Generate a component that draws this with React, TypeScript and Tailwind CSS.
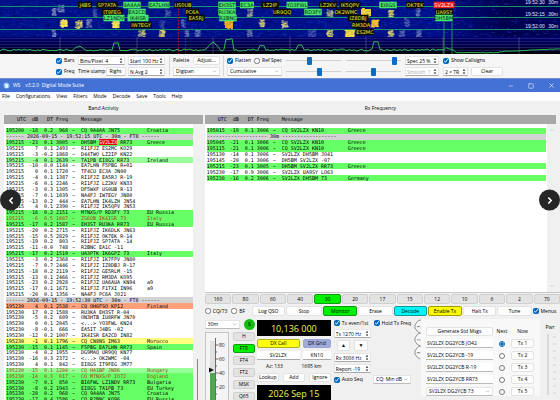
import React from "react";
import { ChevronDown, ChevronLeft, ChevronRight, ChevronUp, Minus, Square, X } from "lucide-react";
import { clsx } from "clsx";

type Tone = "none" | "green" | "pale" | "orange" | "yellow" | "sep";

interface Decode {
  utc: string;
  db: string;
  dt: string;
  freq: string;
  msg: string;
  place?: string;
  tone: Tone;
  red?: boolean;
}

const toneClass: Record<Tone, string> = {
  none: "",
  green: "bg-[#66ff66]",
  pale: "bg-[#99ff99]",
  orange: "bg-[#ffa07a]",
  yellow: "bg-[#ffff80]",
  sep: "bg-[#d3d3d3]",
};

const d = (line: string, place = "", tone: Tone = "none", red = false): Decode => {
  const [utc, db, dt, freq, ...rest] = line.split(" ");
  return { utc, db, dt, freq, msg: rest.join(" "), place, tone, red };
};

const sep = (msg: string): Decode => ({ utc: "", db: "", dt: "", freq: "", msg, tone: "sep" });

const bandRows: Decode[] = [
  d("195200 -18 0.2 968 CQ 9A4AA JN75", "Croatia", "green"),
  sep("------ 2026-09-15 - 19:52:15 UTC - 30m - FT8 ------"),
  d("195215 -23 0.1 3005 DH5BM SV2LZX RR73", "Greece", "green"),
  d("195215 7 0.1 2493 RI1FJZ ES2MC KO29"),
  d("195215 -3 -0.2 1868 D44TWO LZ2IP KN22"),
  d("195215 -4 0.1 2639 TA1PB EI8GS RR73", "Ireland", "pale"),
  d("195215 -10 0.0 1144 EA7LHN F5PBG R+01"),
  d("195215 0 0.1 1720 TF4CU EC3A JN00"),
  d("195215 -4 0.1 1387 RI1FJZ EA5RJ R-19"),
  d("195215 -6 0.1 2246 RI1FJZ LZ2KV KN33"),
  d("195215 -3 0.3 1305 DF5WXF US0UB R-13"),
  d("195215 -7 0.1 1039 NA4FJ IW7EGY JN80"),
  d("195215 -13 0.2 444 EA7LHN IK4LZH JN54"),
  d("195215 4 0.1 2390 RI1FJZ IK5QPV JN53"),
  d("195215 -16 0.2 2151 M7NXS/P RD3FY 73", "EU Russia", "green"),
  d("195215 -6 0.5 1007 ZS6OB IK4ISR 73", "Italy", "green", true),
  d("195215 -17 0.2 1587 EH3ST RU3KA RR73", "EU Russia", "green"),
  d("195215 -20 0.2 2715 RI1FJZ IK6DLK JN63"),
  d("195215 -15 0.5 2829 RI1FJZ OK7EK R-14"),
  d("195215 -19 0.2 803 RI1FJZ SP7ATA -14"),
  d("195215 -11 -0.0 748 R2BNC EA1C -11"),
  d("195215 -17 0.2 1519 UA3PTK IK6GPZ 73", "Italy", "green"),
  d("195215 -3 0.2 2368 RI1FJZ IK7FPV JN80"),
  d("195215 -7 0.7 2446 RI1FJZ IZ8DBJ R-17"),
  d("195215 -18 0.2 2119 RI1FJZ GE5RLM -15"),
  d("195215 -13 0.1 2466 RI1FJZ RM3DA KO95"),
  d("195215 -23 0.2 2928 RI1FJZ UA6AUA KN94", "a9"),
  d("195215 -17 0.1 1671 RI1FJZ F1TXI IN96", "a9"),
  d("195215 -20 0.1 1356 NA4FJ PC6A JO21"),
  sep("------ 2026-09-15 - 19:52:30 UTC - 30m - FT8 ------"),
  d("195230 4 0.1 2538 CQ OH6FSO KP12", "Finland", "orange"),
  d("195230 17 0.2 1588 RU3KA EH3ST R-04"),
  d("195230 -5 0.2 609 ON3HTB IU8RFW JN70"),
  d("195230 0 0.1 2045 <...> YO3FWL KN24"),
  d("195230 -8 -0.1 666 EA5IT J4BS -02"),
  d("195230 -12 0.2 1007 IK4ISR EA2CD IN82"),
  d("195230 -1 0.1 1796 CQ CN8NS IM63", "Morocco", "yellow"),
  d("195230 -15 0.1 1145 F5PBG EA7LHN RR73", "Spain", "green"),
  d("195230 -4 0.2 1955 DG9MAQ UR9QQ KN77"),
  d("195230 -16 0.3 2372 <...> OK2WMC -04"),
  d("195230 4 0.1 842 EI8GS IT9FEG JM77"),
  d("195230 -15 0.1 1284 CQ HA1BF JN86", "Hungary", "pale", true),
  d("195230 -14 0.3 917 CQ M7NXS/P IO72", "England", "green", true),
  d("195230 -7 0.1 850 BI6FWL LZ1NDV RR73", "Bulgaria", "green"),
  d("195230 -8 0.2 1943 EI8GS TA1PB 73", "EU Turkey", "green"),
  d("195230 -20 0.2 968 CQ 9A4AA JN75", "Croatia", "green"),
];

const rxRows: Decode[] = [
  d("195015 -19 0.1 3006 CQ SV2LZX KN10", "Greece", "green"),
  sep("-------------------- 30m ------------------"),
  d("195045 -21 0.1 3006 CQ SV2LZX KN10", "Greece", "green"),
  d("195115 -21 0.1 3006 CQ SV2LZX KN10", "Greece", "green"),
  d("195130 -14 0.1 3006 SV2LZX DH5BM JO41"),
  d("195145 -20 0.1 3006 DH5BM SV2LZX -07"),
  d("195215 -23 0.1 3005 DH5BM SV2LZX RR73", "Greece", "green"),
  d("195230 -17 0.9 3006 SV2LZX UA9SY LO63"),
  d("195230 -16 0.2 3006 SV2LZX DH5BM 73", "Germany", "green"),
];

const mono = "font-['DejaVu_Sans_Mono',monospace] text-[5px]";
const rowCols = "grid grid-cols-[20px_12px_15px_15px_13px_66px_1fr] items-center whitespace-nowrap";

function DecodeRow({ row, mark = false }: { row: Decode; mark?: boolean }) {
  if (row.tone === "sep") {
    return (
      <li className={clsx("flex min-h-0 flex-1 items-center whitespace-pre leading-none text-black", toneClass.sep)}>{row.msg}</li>
    );
  }
  const words = row.msg.split(" ");
  return (
    <li className={clsx("min-h-0 flex-1 leading-none", rowCols, toneClass[row.tone], row.red ? "text-[#a33a1c]" : "text-black")}>
      <span>{row.utc}</span>
      <span className="text-right">{row.db}</span>
      <span className="text-right">{row.dt}</span>
      <span className="text-right">{row.freq}</span>
      <span className="pl-1">~</span>
      <span>
        {mark ? (
          <>
            {words[0]} <mark className="bg-red-600 text-white">{words[1]}</mark> {words[2]}
          </>
        ) : (
          row.msg
        )}
      </span>
      <span>{row.place}</span>
    </li>
  );
}

function ListHeader() {
  return (
    <div className={clsx("h-[9px] shrink-0 bg-[#a8a8a8] pl-[2px] leading-none text-black", mono, rowCols)}>
      <span className="text-right">UTC</span>
      <span className="text-right">dB</span>
      <span className="text-right">DT</span>
      <span className="text-right">Freq</span>
      <span />
      <span>Message</span>
    </div>
  );
}

/* ---------- small form parts ---------- */

function Check({ label, on = false }: { label: string; on?: boolean }) {
  return (
    <label className="flex items-center gap-[2px] whitespace-nowrap">
      <input type="checkbox" defaultChecked={on} className="size-[6px] accent-[#0067c0]" />
      {label}
    </label>
  );
}

function Btn({ children, className }: { children: React.ReactNode; className?: string }) {
  return (
    <button
      type="button"
      className={clsx("flex h-[9px] items-center justify-center whitespace-nowrap rounded-[2px] border leading-none", className ?? "border-[#e2e2e2] bg-[#fdfdfd]")}
    >
      {children}
    </button>
  );
}

function Spin({ value, label, className }: { value: string; label: string; className?: string }) {
  return (
    <span className={clsx("flex h-[9px] items-center rounded-[1px] border border-[#e4e4e4] border-b-[#aaa] bg-white px-[1px]", className)}>
      <input aria-label={label} defaultValue={value} className="w-0 min-w-0 flex-1 bg-transparent leading-none" />
      <svg viewBox="0 0 4 8" className="h-[7px] w-[4px] shrink-0" aria-hidden="true">
        <path d="M0.5 3L2 1L3.5 3ZM0.5 5L2 7L3.5 5Z" fill="#222" />
      </svg>
    </span>
  );
}

function Drop({ value, label, className }: { value: string; label: string; className?: string }) {
  return (
    <span className={clsx("relative flex h-[9px] items-center rounded-[1px] border border-[#e4e4e4] border-b-[#bbb] bg-white", className)}>
      <select aria-label={label} className="w-full appearance-none bg-transparent pl-[2px] leading-none">
        <option>{value}</option>
      </select>
      <ChevronDown className="pointer-events-none absolute right-[2px] size-[5px] text-[#666]" />
    </span>
  );
}

/* ---------- waterfall ---------- */

type Tag = [string, number, number, "g" | "y" | "r"];

const tags: Tag[] = [
  ["J4BS", 85, 5, "y"], ["SP7ATA", 107, 5, "y"], ["9A4AA", 132, 5, "g"], ["EA7LHN", 159, 5, "g"],
  ["US0UB", 183, 5, "y"], ["EH3ST", 227, 5, "g"], ["EC3A", 247, 5, "g"], ["LZ2IP", 270, 5, "y"],
  ["YO3FWL", 297, 5, "g"], ["LZ2KV", 328, 5, "y"], ["IK5QPV", 350, 5, "y"], ["EI8GS", 388, 5, "g"],
  ["OK7EK", 415, 5, "y"], ["SV2LZX", 444, 5, "r"],
  ["IT9FEG", 112, 12, "y"], ["EA2CD", 137, 12, "g"], ["PC6A", 192, 12, "y"], ["RU3KA", 227, 12, "g"],
  ["UR9QQ", 282, 12, "y"], ["RD3FY", 313, 12, "g"], ["OK2WMC", 346, 12, "y"], ["UA9SY", 444, 12, "y"],
  ["LZ1NDV", 114, 18, "g"], ["IK4ISR", 138, 18, "g"], ["EA5RJ", 196, 18, "y"], ["R2BNC", 228, 18, "g"],
  ["IZ8DBJ", 358, 18, "y"], ["DH5BM", 444, 18, "g"],
  ["IW7EGY", 141, 25, "y"], ["RM3DA", 361, 25, "y"], ["ES2MC", 365, 32, "y"],
];

// x, y, width, colour, strength
const blobs: [number, number, number, string, number][] = [
  [64, 23, 9, "#ffe955", 0.95], [79, 24, 9, "#ddd36a", 0.9], [89, 23, 7, "#8f9ac0", 0.6], [116, 24, 9, "#ffe94d", 0.95],
  [142, 33, 9, "#c9c277", 0.8], [162, 33, 8, "#e8dc66", 0.85], [229, 24, 10, "#ffb31f", 1], [262, 23, 7, "#d9cf72", 0.8],
  [54, 12, 6, "#8c96c0", 0.6], [61, 8, 8, "#8c96c0", 0.6], [54, 33, 6, "#8c96c0", 0.6], [250, 13, 7, "#a9ab93", 0.7],
  [187, 33, 6, "#7480bd", 0.6], [198, 33, 8, "#7f8bc0", 0.6], [250, 33, 7, "#8f98ba", 0.5], [285, 24, 8, "#d4cc83", 0.8],
  [330, 13, 8, "#b9b985", 0.8], [330, 33, 8, "#dbd26c", 0.8], [350, 33, 11, "#ffe63c", 0.95], [366, 12, 12, "#ffdf3a", 1],
  [375, 23, 9, "#ffc629", 1], [391, 13, 7, "#ddd465", 0.85], [391, 33, 7, "#d5cd70", 0.8], [402, 34, 7, "#6b78bd", 0.6],
  [419, 33, 7, "#7480bd", 0.6], [407, 22, 7, "#6b78bd", 0.5], [162, 24, 7, "#4a57a8", 0.5], [183, 23, 5, "#6572b8", 0.6],
  [312, 33, 10, "#5663b4", 0.6], [418, 12, 6, "#7884bf", 0.6], [168, 13, 7, "#5c69b0", 0.5], [95, 13, 6, "#5c69b0", 0.5],
];

const rand = (n: number) => {
  const s = Math.sin(n * 127.1) * 43758.5453;
  return s - Math.floor(s);
};

const tagFill = { g: "#4be36f", y: "#0b0b00", r: "#f01818" };
const tagText = { g: "#002c08", y: "#f5f03c", r: "#ffffff" };

function peak(x: number) {
  const bump = (c: number, w: number, h: number) => (Math.abs(x - c) < w ? h : 0);
  return bump(79, 4, 3) + bump(116, 4, 7) + bump(229, 5, 11) + bump(262, 3, 4) + bump(300, 4, 5) + bump(376, 4, 8) + Math.max(0, 8 - Math.abs(x - 213)) + bump(447, 3, 2);
}

function Waterfall() {
  let trace = "M0 51";
  for (let x = 2; x <= 560; x += 2) {
    const base = x > 455 ? 52 - Math.max(0, (x - 500) / 20) + (x < 500 ? 1 : 0) : 51;
    trace += `L${x} ${(base - peak(x) - rand(x) * (x > 455 ? 0.6 : 2)).toFixed(1)}`;
  }
  return (
    <svg viewBox="0 0 560 54" preserveAspectRatio="xMidYMid slice" className="block h-[54px] w-full shrink-0" role="img" aria-label="Waterfall">
      <defs>
        <linearGradient id="sea">
          <stop offset="0" stopColor="#001088" />
          <stop offset="0.78" stopColor="#00108c" />
          <stop offset="0.9" stopColor="#00004e" />
          <stop offset="1" stopColor="#000058" />
        </linearGradient>
        <linearGradient id="floor" x2="0" y2="1">
          <stop offset="0" stopColor="#000070" />
          <stop offset="0.6" stopColor="#00003a" />
          <stop offset="1" stopColor="#000000" />
        </linearGradient>
      </defs>
      <rect width="560" height="54" fill="url(#sea)" />
      {Array.from({ length: 1500 }, (_, i) => (
        <rect key={i} x={rand(i + 1) * 560} y={rand(i + 5000) * 37} width={1 + rand(i + 9) * 3} height="1" fill={i % 3 ? "#1833b4" : "#000058"} opacity={0.5} />
      ))}
      {blobs.map(([x, y, w, c, o], b) => (
        <g key={b} fill={c}>
          <rect x={x - w / 2 + 1} y={y - 3} width={w - 2} height="7" opacity={o > 0.9 ? 0.85 : o * 0.5} />
          {Array.from({ length: 22 }, (_, i) => (
            <rect key={i} x={x - w / 2 + rand(b * 40 + i) * (w - 2)} y={y - 4 + rand(b * 71 + i + 3) * 8} width="2" height="1" opacity={o} />
          ))}
        </g>
      ))}
      <rect y="37" width="560" height="17" fill="url(#floor)" />
      {[38, 41, 44, 47, 50].map((y) => (
        <path key={y} d={`M0 ${y}.5H560`} stroke="#3a3a98" strokeWidth="0.6" opacity="0.8" />
      ))}
      {[60, 137, 213, 290, 366, 443, 519].map((x) => (
        <path key={x} d={`M${x} 37V54`} stroke="#8a8ab5" strokeWidth="0.6" opacity="0.7" />
      ))}
      {[6, 17, 29].map((y) => (
        <path key={y} d={`M0 ${y}.5H560`} stroke="#18a068" strokeWidth="0.9" />
      ))}
      <path d="M178.5 8V54M185.5 8V54" stroke="#c01038" strokeDasharray="2 1" strokeWidth="0.8" />
      <path d="M444 22V54M452 22V54" stroke="#30c060" strokeWidth="0.7" />
      <path d={trace} fill="none" stroke="#38c860" strokeWidth="0.9" />
      <g fontFamily="'DejaVu Sans', sans-serif" fontSize="5" textAnchor="middle">
        {tags.map(([name, x, y, k]) => (
          <g key={name}>
            <rect x={x - name.length * 1.75} y={y - 3.3} width={name.length * 3.5} height="6.6" fill={tagFill[k]} />
            <text x={x} y={y + 2} fill={tagText[k]}>
              {name}
            </text>
          </g>
        ))}
      </g>
      <g fontFamily="'Liberation Sans', sans-serif" fontSize="5" textAnchor="middle" fill="#e6e6f5">
        {["19:52:30", "19:52:15", "19:52:00"].map((t, i) => (
          <g key={t}>
            <text x="535" y={4 + i * 12}>{t}</text>
            <text x="553" y={4 + i * 12}>30m</text>
          </g>
        ))}
      </g>
    </svg>
  );
}

function Slider({ label, value, className }: { label: string; value: number; className: string }) {
  return (
    <input
      type="range"
      aria-label={label}
      defaultValue={value}
      className={clsx(
        "h-[9px] min-w-0 appearance-none bg-[linear-gradient(#d0d0d0,#d0d0d0)] bg-[length:100%_1px] bg-center bg-no-repeat [&::-webkit-slider-thumb]:h-[8px] [&::-webkit-slider-thumb]:w-[5px] [&::-webkit-slider-thumb]:appearance-none [&::-webkit-slider-thumb]:rounded-[1px] [&::-webkit-slider-thumb]:bg-[#0a6cc4]",
        className,
      )}
    />
  );
}

function WaterfallControls() {
  return (
    <div className="flex h-[25px] shrink-0 items-center border-b border-[#6f8fd0] bg-[#f5f5f5] pl-[56px]">
      <div className="grid grid-cols-[22px_48px_39px] gap-y-[2px] border-r border-[#d5d5d5] pr-1">
        <Check label="Bars" on />
        <Spin label="Bins per pixel" value="Bins/Pixel  4" className="mr-[1px]" />
        <Spin label="Start" value="Start 100 Hz" className="ml-[2px]" />
        <Check label="Freq" on />
        <span className="flex items-center whitespace-nowrap">
          Time stamp
          <Drop label="Time stamp" value="Right" className="ml-[1px] min-w-0 flex-1" />
        </span>
        <Spin label="Averages" value="N Avg 2" className="ml-[2px]" />
      </div>
      <div className="grid w-[54px] gap-y-[2px] border-r border-[#d5d5d5] px-[3px]">
        <span className="flex items-center justify-between">
          Palette
          <Btn className="w-[27px] border-[#e2e2e2] bg-[#fdfdfd]">Adjust...</Btn>
        </span>
        <Drop label="Palette" value="Digipan" />
      </div>
      <div className="grid w-[58px] gap-y-[2px] pl-[3px]">
        <span className="flex h-[9px] items-center gap-[3px]">
          <Check label="Flatten" on />
          <Check label="Ref Spec" />
        </span>
        <Drop label="Spectrum" value="Cumulative" />
      </div>
      <div className="grid w-[119px] grid-cols-2 gap-x-1 gap-y-[2px] pl-1">
        <Slider label="Waterfall gain" value={42} className="w-full" />
        <Slider label="Waterfall zero" value={92} className="w-full" />
        <Slider label="Spectrum gain" value={62} className="w-full" />
        <Slider label="Spectrum zero" value={50} className="w-full" />
      </div>
      <div className="ml-1 grid w-[34px] gap-y-[2px]">
        <Spin label="Spectrum share" value="Spec 25 %" />
        <Spin label="Smooth" value="Smooth  1" className="text-[#aaa]" />
      </div>
      <div className="ml-1 grid gap-y-[2px]">
        <span className="flex h-[9px] items-center"><Check label="Show Callsigns" on /></span>
        <span className="flex gap-[3px]">
          <Spin label="Slots" value="2 × TR" className="w-[25px]" />
          <Btn className="w-[32px] border-[#e2e2e2] bg-[#fdfdfd]">Clear</Btn>
        </span>
      </div>
    </div>
  );
}

/* ---------- transmit controls ---------- */

const bands = ["160", "80", "60", "40", "30", "20", "17", "15", "12", "10", "6", "2", "70"];
const modes = ["H", "FT8", "FT4", "FT2", "MSK", "Q65"];
const messages = ["SV2LZX DG2YCB JO42", "SV2LZX DG2YCB -19", "SV2LZX DG2YCB R-19", "SV2LZX DG2YCB RR73", "SV2LZX DG2YCB 73"];

const greyBtn = "border-[#cfcfcf] bg-[#e3e3e3]";
const litBtn = "border-[#109a10] bg-[#00f000]";

function Meter() {
  return (
    <svg viewBox="0 0 24 68" className="h-[68px] w-[24px]" role="img" aria-label="Input level">
      <rect x="0.5" y="0.5" width="23" height="72" fill="#f4f4f4" stroke="#c4c4c4" />
      <rect x="5" y="9" width="5" height="59" fill="#e0e0e0" />
      <rect x="5" y="41" width="5" height="27" fill="#4fa84f" />
      <path d="M4 35.5L9 38L4 40.5Z" fill="#111" />
      <path d="M10.5 6V68" stroke="#333" strokeWidth="0.7" />
      {Array.from({ length: 9 }, (_, i) => (
        <path key={i} d={`M10.5 ${13 + i * 7}H${i % 2 ? 12 : 13.5}`} stroke="#333" strokeWidth="0.7" />
      ))}
      <g fontSize="5" fontFamily="'Open Sans', sans-serif" fill="#222">
        {[80, 60, 40, 20].map((n, i) => (
          <text key={n} x="14" y={15 + i * 14}>{n}</text>
        ))}
      </g>
    </svg>
  );
}

function Controls() {
  return (
    <div className="bg-[#f0f0f0]">
      <div className="grid grid-cols-13 gap-[1px] border-t border-[#c8c8c8] pt-[1px]">
        {bands.map((b) => (
          <Btn key={b} className={clsx("h-[10px]!", b === "30" ? litBtn : greyBtn)}>{b}</Btn>
        ))}
      </div>
      <div className="grid grid-cols-[26fr_20fr_34fr_37fr_35fr_35fr_34fr_35fr_34fr_35fr_28fr] items-center gap-[1px] py-[2px] *:h-[10px]">
        <Check label="CQ/73" />
        <Check label="BF" />
        <Btn>Log QSO</Btn>
        <Btn>Stop</Btn>
        <Btn className={litBtn}>Monitor</Btn>
        <Btn>Erase</Btn>
        <Btn className="border-[#159a9a] bg-[#00f5f5]">Decode</Btn>
        <Btn className="border-[#a0a000] bg-[#fafa00]">Enable Tx</Btn>
        <Btn>Halt Tx</Btn>
        <Btn>Tune</Btn>
        <Check label="Menus" on />
      </div>
      <div className="flex items-start pt-[1px]">
        <div className="w-[50px] shrink-0">
          <div className="flex items-center justify-between">
            <Drop label="Band" value="30m" className="w-[35px]" />
            <span className="flex size-[11px] items-center justify-center rounded-full bg-[#12c012] text-[6px]">S</span>
          </div>
          <div className="mt-[2px] flex justify-between">
            <Meter />
            <div className="flex w-[22px] flex-col gap-[3px]">
              {modes.map((m) => (
                <Btn key={m} className={m === "FT8" ? litBtn : greyBtn}>{m}</Btn>
              ))}
            </div>
          </div>
        </div>
        <div className="ml-[2px] mt-[1px] flex w-[74px] shrink-0 flex-col gap-[3px]">
          <output className="flex h-[16px] items-center justify-center bg-black text-[9px] leading-none text-[#f5f550]">10,136 000</output>
          <div className="grid grid-cols-[43px_1fr] gap-x-[3px] gap-y-[3px]">
            <Btn className="border-[#b0b020] bg-[#ffff10]">DX Call</Btn>
            <Btn className="border-[#9aa5d6] bg-[#9fa9da]">DX Grid</Btn>
            <input aria-label="DX call" defaultValue="SV2LZX" className="h-[9px] min-w-0 border-b border-[#aaa] bg-white text-center leading-none" />
            <input aria-label="DX grid" defaultValue="KN10" className="h-[9px] min-w-0 border-b border-[#aaa] bg-white text-center leading-none" />
          </div>
          <div className="flex h-[7px] items-center justify-around leading-none">
            <span>Az: 133</span>
            <span>1695 km</span>
          </div>
          <div className="grid grid-cols-3 gap-1">
            <Btn>Lookup</Btn>
            <Btn>Add</Btn>
            <Btn>Ignore</Btn>
          </div>
          <output className="flex h-[16px] items-center justify-center whitespace-nowrap bg-black text-[9px] leading-none text-[#f5f550]">2026 Sep 15</output>
        </div>
        <div className="ml-[3px] min-w-0 flex-1">
          <div className="flex h-[8px] items-center gap-[5px]">
            <Check label="Tx even/1st" on />
            <Check label="Hold Tx Freq" on />
          </div>
          <div className="mt-[2px] flex w-[37px] flex-col gap-[2px]">
            <Spin label="Transmit frequency" value="Tx 1270 Hz" />
            <div className="grid grid-cols-2 gap-1 px-[3px]">
              <Btn className="h-[11px]! border-[#e2e2e2] bg-[#fdfdfd]">▲</Btn>
              <Btn className="h-[11px]! border-[#e2e2e2] bg-[#fdfdfd]">▼</Btn>
            </div>
            <Spin label="Receive frequency" value="Rx 3006 Hz" />
            <Spin label="Report" value="Report -19" />
          </div>
          <div className="mt-[2px] flex items-center justify-between">
            <Check label="Auto Seq" on />
            <Drop label="CQ strategy" value="CQ: Min dB" className="w-[38px]" />
          </div>
        </div>
        <svg viewBox="0 0 8 42" className="ml-[2px] h-[42px] w-[8px] shrink-0" aria-hidden="true">
          {[0, 13, 26].map((y, i) => (
            <g key={y}>
              <path d={`M8 ${y + 1}Q5 ${y + 1} 4 ${y + 3}L2 ${y + 6}V${y + 9}L4 ${y + 12}L7 ${y + 14}`} fill="#f8f8f8" stroke="#777" strokeWidth="0.8" />
              <text x={-y - 9} y="7" transform="rotate(-90)" fontSize="4" fill="#222">{i + 1}</text>
            </g>
          ))}
        </svg>
        <div className="grid w-[119px] shrink-0 grid-cols-[67px_16px_23px] items-center justify-items-stretch gap-x-[1px] gap-y-[3px] bg-[#f8f8f8] px-[5px] pt-[8px]">
          <Btn>Generate Std Msgs</Btn>
          <span className="text-center">Next</span>
          <span className="text-center">Now</span>
          {messages.map((m, i) => (
            <React.Fragment key={m}>
              {i === 4 ? (
                <Drop label="Message 5" value={m} />
              ) : (
                <input aria-label={`Message ${i + 1}`} defaultValue={m} className="h-[9px] min-w-0 border-b border-[#bbb] bg-white pl-[1px] leading-none" />
              )}
              <input type="radio" name="next" aria-label={`Next is Tx ${i + 1}`} defaultChecked={i === 0} className="size-[6px] justify-self-center accent-[#0067c0]" />
              <Btn>Tx {i + 1}</Btn>
            </React.Fragment>
          ))}
        </div>
        <div className="flex w-[20px] shrink-0 flex-col items-center pt-[5px]">
          <span>Pwr</span>
          <svg viewBox="0 0 20 64" className="h-[64px] w-[20px]" aria-hidden="true">
            <path d="M8 3V64" stroke="#d0d0d0" strokeWidth="1.5" />
            {Array.from({ length: 9 }, (_, i) => (
              <path key={i} d={`M13 ${6 + i * 7}H16`} stroke="#c8c8c8" strokeWidth="0.8" />
            ))}
          </svg>
        </div>
      </div>
    </div>
  );
}

function RoundArrow({ side }: { side: "left" | "right" }) {
  const Icon = side === "left" ? ChevronLeft : ChevronRight;
  return (
    <button
      type="button"
      aria-label={side === "left" ? "Previous" : "Next"}
      className={clsx("absolute top-1/2 flex size-[21px] -translate-y-1/2 items-center justify-center rounded-full bg-[#262626] text-white", side === "left" ? "left-0" : "right-0")}
    >
      <Icon className="size-[10px]" strokeWidth={4} />
    </button>
  );
}

export default function App() {
  return (
    <div className="relative flex h-screen flex-col overflow-hidden bg-[#f0f0f0] font-['Open_Sans',sans-serif] text-[5px] leading-[7px] text-black">
      <Waterfall />
      <WaterfallControls />
      <header className="flex h-[13px] shrink-0 items-center bg-[#4472d4] pl-[3px] pr-[5px] text-white">
        <svg viewBox="0 0 8 8" className="size-[7px]" aria-hidden="true">
          <circle cx="4" cy="4" r="3.5" fill="#79b8f5" />
          <path d="M2 2Q5 1 6 4T3 7Z" fill="#eaf5ff" />
        </svg>
        <h1 className="ml-[3px] flex gap-[5px] whitespace-nowrap">
          <span>WS</span>
          <span>v3.2.0 &nbsp;Digital Mode Suite</span>
        </h1>
        <div className="ml-auto flex items-center gap-[14px]">
          <button type="button" aria-label="Minimise"><Minus className="size-[6px]" /></button>
          <button type="button" aria-label="Maximise"><Square className="size-[6px]" /></button>
          <button type="button" aria-label="Close"><X className="size-[7px]" /></button>
        </div>
      </header>
      <nav className="flex h-[9px] shrink-0 items-center gap-[6px] bg-white pl-[2px]">
        {["File", "Configurations", "View", "Filters", "Mode", "Decode", "Save", "Tools", "Help"].map((m) => (
          <button type="button" key={m}>{m}</button>
        ))}
      </nav>
      <main className="grid min-h-0 flex-1 grid-cols-[199fr_354fr] gap-[2px] pl-1">
        <section className="flex min-h-0 flex-col">
          <h2 className="flex h-[14px] shrink-0 items-center justify-center">Band Activity</h2>
          <ListHeader />
          <div className="flex min-h-0 flex-1">
            <div className={clsx("flex min-w-0 flex-1 flex-col bg-white pl-[2px] pt-[4px]", mono)}>
              <ul className="flex min-h-0 flex-1 flex-col overflow-hidden">
                {bandRows.map((r, i) => (
                  <DecodeRow key={i} row={r} mark={i === 2} />
                ))}
              </ul>
              <ul className="flex h-[3px] shrink-0 flex-col overflow-hidden">
                <DecodeRow row={d("195230 -17 0.4 1586 CQ R2BNC KO96", "EU Russia", "green")} />
              </ul>
            </div>
            <div className="flex w-[10px] items-end justify-center bg-[#f0f0f0]">
              <div className="h-[41px] w-[1px] bg-[#888]" />
            </div>
          </div>
        </section>
        <section className="flex min-h-0 flex-col">
          <div className="mr-1 flex h-[191px] shrink-0 flex-col">
            <h2 className="flex h-[14px] shrink-0 items-center justify-center">Rx Frequency</h2>
            <ListHeader />
            <div className="flex min-h-0 flex-1 bg-white">
              <ul className={clsx("flex h-[57px] min-w-0 flex-1 flex-col pl-[2px] pt-[4px]", mono)}>
                {rxRows.map((r, i) => (
                  <DecodeRow key={i} row={r} />
                ))}
              </ul>
              <div className="ml-[1px] flex w-[9px] flex-col items-center justify-between bg-[#f0f0f0] py-[4px]">
                <ChevronUp className="size-[4px] text-[#777]" />
                <ChevronDown className="size-[4px] text-[#777]" />
              </div>
            </div>
          </div>
          <Controls />
        </section>
      </main>
      <RoundArrow side="left" />
      <RoundArrow side="right" />
    </div>
  );
}
